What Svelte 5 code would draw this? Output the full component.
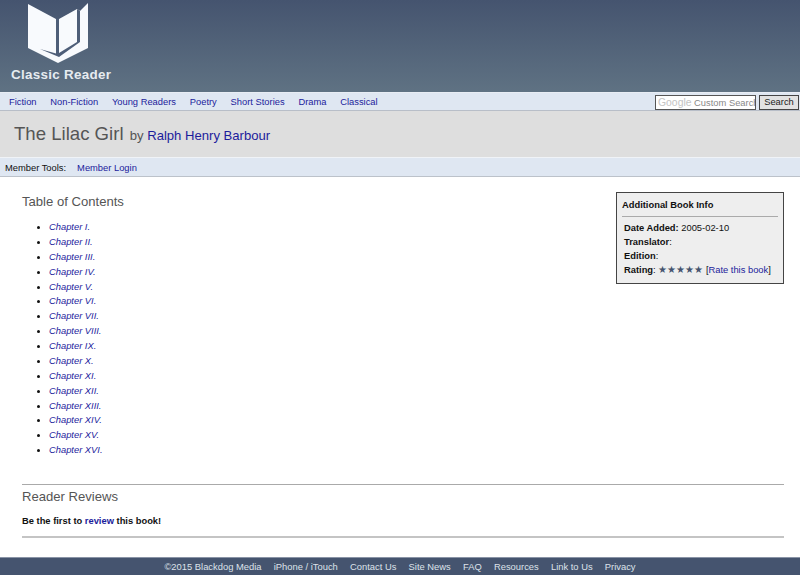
<script>
	const nav = ['Fiction', 'Non-Fiction', 'Young Readers', 'Poetry', 'Short Stories', 'Drama', 'Classical'];
	const chapters = ['I', 'II', 'III', 'IV', 'V', 'VI', 'VII', 'VIII', 'IX', 'X', 'XI', 'XII', 'XIII', 'XIV', 'XV', 'XVI'];
	const footer = ['iPhone / iTouch', 'Contact Us', 'Site News', 'FAQ', 'Resources', 'Link to Us', 'Privacy'];
</script>

<div class="page">
	<header class="masthead">
		<div class="logo">
			<svg width="62" height="62" viewBox="0 0 62 62" aria-hidden="true">
				<path d="M1 1 L29 16 L32 16 L50 6 L53 8 L61 0 L61 45 L31 60 L1 45 Z" fill="#f8fafd" />
				<path d="M29 16 L32 16 L32 51 L29 51 Z" fill="#4e5e78" />
				<path d="M50 6 L53 8 L53 39 L32 54 L13 46 L29 50.5 L32 50 L50 39 Z" fill="#4e5e78" />
			</svg>
			<div class="logo-text">Classic Reader</div>
		</div>
	</header>

	<nav class="topnav">
		<div class="links">
			{#each nav as item}
				<a href="#top">{item}</a>
			{/each}
		</div>
		<form class="search">
			<div class="search-box"><span class="g">Google</span> Custom Search</div>
			<div class="search-btn">Search</div>
		</form>
	</nav>

	<div class="titleband">
		<h1>The Lilac Girl <small>by <a href="#top">Ralph Henry Barbour</a></small></h1>
	</div>

	<div class="memberbar">
		<span>Member Tools:</span>
		<a href="#top">Member Login</a>
	</div>

	<main class="content">
		<div class="columns">
			<section class="toc">
				<h2>Table of Contents</h2>
				<ul>
					{#each chapters as c}
						<li><a href="#top">Chapter {c}.</a></li>
					{/each}
				</ul>
			</section>
			<aside class="info">
				<h3>Additional Book Info</h3>
				<div class="rows">
					<div><b>Date Added:</b> 2005-02-10</div>
					<div><b>Translator</b>:</div>
					<div><b>Edition</b>:</div>
					<div><b>Rating</b>: <span class="stars">★★★★★</span> [<a href="#top">Rate this book</a>]</div>
				</div>
			</aside>
		</div>
		<section class="reviews">
			<h2>Reader Reviews</h2>
			<p>Be the first to <a href="#top">review</a> this book!</p>
		</section>
	</main>

	<footer class="foot">
		<span>©2015 Blackdog Media</span>
		{#each footer as item}
			<a href="#top">{item}</a>
		{/each}
	</footer>
</div>

<style>
	:global(body) {
		margin: 0;
		background: #fff;
	}
	.page {
		font-family: "Liberation Sans", Arial, sans-serif;
		font-size: 9.35px;
		color: #111;
		height: 577px;
		overflow: hidden;
	}
	a {
		color: #1c1c9c;
		text-decoration: none;
	}
	.masthead {
		height: 92px;
		box-sizing: border-box;
		background: linear-gradient(#45546f, #5f7283);
		padding: 3px 0 0 11px;
	}
	.logo {
		width: 102px;
	}
	.logo svg {
		display: block;
		margin-left: 16px;
	}
	.logo-text {
		margin-top: 2px;
		color: #e6ebf0;
		font-size: 13.4px;
		line-height: 16px;
		font-weight: bold;
		white-space: nowrap;
		letter-spacing: 0.3px;
	}
	.topnav {
		height: 19px;
		box-sizing: border-box;
		background: #dfe7f2;
		border-top: 1px solid #e8edf4;
		border-bottom: 1px solid #b8bec8;
		display: flex;
		align-items: center;
		justify-content: space-between;
		padding: 1px 1px 0 9px;
	}
	.links {
		display: flex;
		gap: 13.8px;
	}
	.search {
		display: flex;
		gap: 3px;
		margin-top: 1px;
	}
	.search-box {
		width: 101px;
		height: 15px;
		box-sizing: border-box;
		background: #fff;
		border: 1px solid #555;
		color: #888;
		line-height: 13px;
		padding-left: 2px;
		white-space: nowrap;
		overflow: hidden;
	}
	.g {
		color: #c4c4c4;
		font-size: 10.4px;
	}
	.search-btn {
		width: 40px;
		height: 15px;
		box-sizing: border-box;
		background: #e2e2e2;
		border: 1px solid #444;
		line-height: 13px;
		text-align: center;
		color: #222;
	}
	.titleband {
		height: 46px;
		box-sizing: border-box;
		background: #dedede;
		padding: 11px 0 0 14px;
	}
	h1 {
		margin: 0;
		font-size: 18.6px;
		font-weight: normal;
		color: #555;
		line-height: 24px;
	}
	h1 small {
		font-size: 13.1px;
		margin-left: 1px;
	}
	.memberbar {
		height: 20px;
		box-sizing: border-box;
		background: #dfe7f2;
		border-top: 1px solid #f0f3f7;
		border-bottom: 1px solid #bcc2ca;
		display: flex;
		align-items: center;
		gap: 11px;
		padding: 1px 0 0 5px;
	}
	.content {
		padding: 0 16px 0 22px;
		height: 380px;
		box-sizing: border-box;
	}
	.columns {
		display: flex;
		justify-content: space-between;
		align-items: flex-start;
		height: 307px;
		border-bottom: 1px solid #aaa;
	}
	h2 {
		margin: 0;
		font-size: 13.1px;
		font-weight: normal;
		color: #555;
		line-height: 17px;
	}
	.toc h2 {
		margin-top: 16px;
	}
	ul {
		margin: 10px 0 0;
		padding: 0 0 0 27px;
		line-height: 14.87px;
	}
	li a {
		font-style: italic;
	}
	.info {
		width: 168px;
		height: 92px;
		margin-top: 15px;
		box-sizing: border-box;
		background: #eee;
		border: 1px solid #444;
		padding: 6px 5px 0;
	}
	h3 {
		margin: 0;
		font-size: 9.35px;
		line-height: 12px;
		padding-bottom: 5px;
		border-bottom: 1px solid #aaa;
	}
	.rows {
		padding: 4px 0 0 2px;
		line-height: 14px;
		white-space: nowrap;
	}
	.stars {
		color: #45546f;
		font-size: 9.8px;
	}
	.reviews {
		height: 53px;
		box-sizing: border-box;
		padding-top: 3px;
		border-bottom: 2px solid #c4c4c4;
	}
	.reviews p {
		margin: 10px 0 0;
		font-weight: bold;
		line-height: 12px;
	}
	.foot {
		height: 18px;
		box-sizing: border-box;
		background: #45546f;
		border-top: 1px solid #8a94a6;
		display: flex;
		justify-content: center;
		align-items: center;
		gap: 12.2px;
		color: #dde2ea;
		font-size: 9.4px;
	}
	.foot a {
		color: #dde2ea;
	}
</style>
